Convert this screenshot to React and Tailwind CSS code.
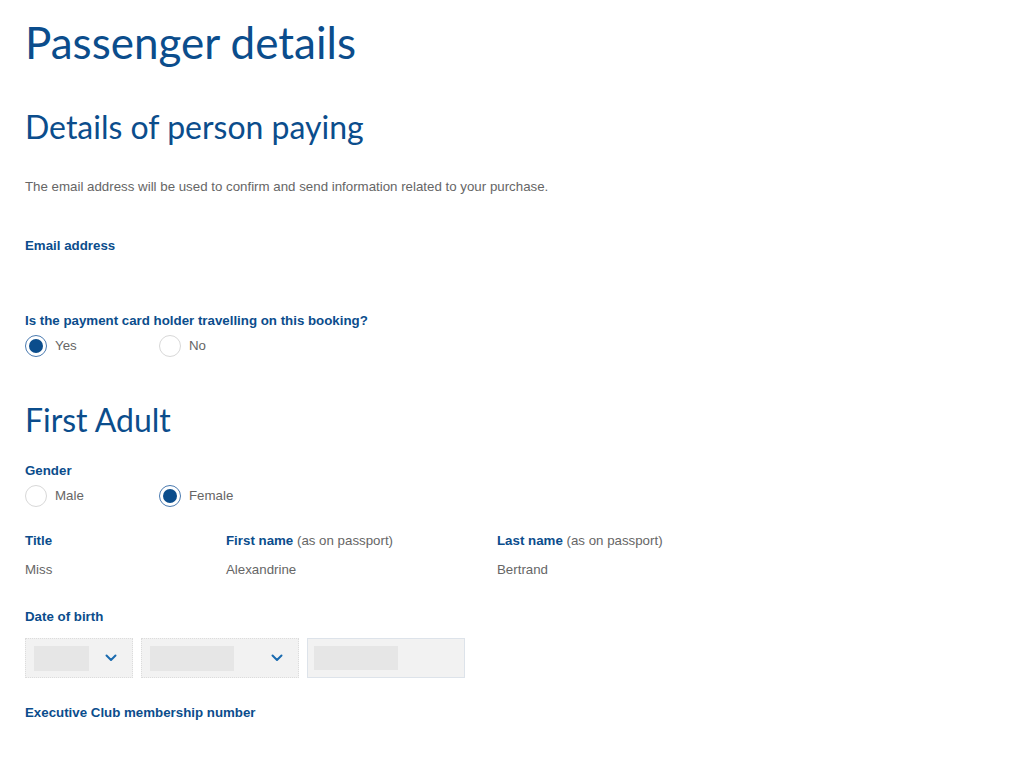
import React from 'react';

const BLUE = 'text-[#0b4d8c]';

function Radio({ checked, label, className = '' }) {
  return (
    <label className={`flex items-center gap-2 ${className}`}>
      <span
        className={`flex h-[22px] w-[22px] items-center justify-center rounded-full border ${
          checked ? 'border-[#4a7ab0]' : 'border-[#d8d8d8]'
        } bg-white`}
      >
        {checked ? <span className="h-[14px] w-[14px] rounded-full bg-[#0b4d8c]" /> : null}
      </span>
      <span className="text-[13.3px] text-[#666]">{label}</span>
    </label>
  );
}

function FieldLabel({ children, className = '' }) {
  return <div className={`text-[13.3px] font-bold leading-[18px] ${BLUE} ${className}`}>{children}</div>;
}

function Chevron() {
  return (
    <svg width="12" height="8" viewBox="0 0 12 8" fill="none">
      <path d="M1.5 1.5 L6 6 L10.5 1.5" stroke="#1a6bb0" strokeWidth="2" strokeLinecap="round" strokeLinejoin="round" />
    </svg>
  );
}

function SelectBox({ width, inner }) {
  return (
    <div
      className={`flex h-10 items-center justify-between border border-dotted border-[#dcdcdc] bg-[#f2f2f2] pl-2 pr-[15px] ${width}`}
    >
      <div className={`h-[25px] bg-[#e6e6e6] ${inner}`} />
      <Chevron />
    </div>
  );
}

export default function App() {
  return (
    <div className="min-h-[776px] bg-white px-[25px] pt-[14px] font-['Liberation_Sans',Arial,sans-serif]">
      <h1 className={`font-['Lato',sans-serif] text-[44px] leading-[56px] ${BLUE}`}>Passenger details</h1>

      <h2 className={`mt-[37px] font-['Lato',sans-serif] text-[32px] leading-[40px] ${BLUE}`}>
        Details of person paying
      </h2>

      <p className="mt-[31px] text-[13.3px] leading-[18px] text-[#666]">
        The email address will be used to confirm and send information related to your purchase.
      </p>

      <FieldLabel className="mt-[41px]">Email address</FieldLabel>

      <FieldLabel className="mt-[57px]">Is the payment card holder travelling on this booking?</FieldLabel>
      <div className="mt-[5px] flex">
        <Radio checked label="Yes" className="w-[134px]" />
        <Radio label="No" />
      </div>

      <h2 className={`mt-[43px] font-['Lato',sans-serif] text-[32px] leading-[40px] ${BLUE}`}>First Adult</h2>

      <FieldLabel className="mt-[22px]">Gender</FieldLabel>
      <div className="mt-[5px] flex">
        <Radio label="Male" className="w-[134px]" />
        <Radio checked label="Female" />
      </div>

      <div className="mt-[25px] grid grid-cols-[201px_271px_auto] text-[13.3px] leading-[18px]">
        <FieldLabel>Title</FieldLabel>
        <div>
          <span className={`font-bold ${BLUE}`}>First name</span>{' '}
          <span className="text-[#666]">(as on passport)</span>
        </div>
        <div>
          <span className={`font-bold ${BLUE}`}>Last name</span>{' '}
          <span className="text-[#666]">(as on passport)</span>
        </div>
        <div className="mt-[11px] text-[#666]">Miss</div>
        <div className="mt-[11px] text-[#666]">Alexandrine</div>
        <div className="mt-[11px] text-[#666]">Bertrand</div>
      </div>

      <FieldLabel className="mt-[29px]">Date of birth</FieldLabel>
      <div className="mt-[12px] flex gap-2">
        <SelectBox width="w-[108px]" inner="w-[55px]" />
        <SelectBox width="w-[158px]" inner="w-[84px]" />
        <div className="flex h-10 w-[158px] items-center border border-[#dde3ea] bg-[#f2f2f2] pl-[6px]">
          <div className="h-[24px] w-[84px] bg-[#e6e6e6]" />
        </div>
      </div>

      <FieldLabel className="mt-[26px]">Executive Club membership number</FieldLabel>
    </div>
  );
}
